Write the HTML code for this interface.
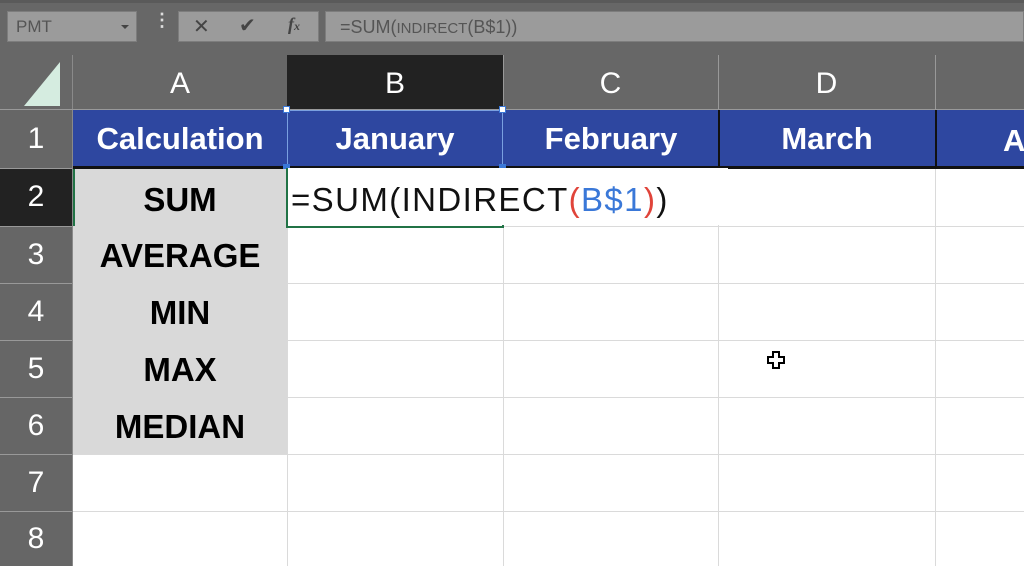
<!DOCTYPE html>
<html><head><meta charset="utf-8"><style>
*{margin:0;padding:0;box-sizing:border-box}
body{width:1024px;height:566px;overflow:hidden;background:#fff;font-family:"Liberation Sans",sans-serif;position:relative}
.a{position:absolute}
.c{display:flex;align-items:center;justify-content:center}
.hd{color:#fff;font-size:30px}
.bl{background:#2e47a0;color:#fff;font-weight:bold;font-size:31px}
.gr{background:#d9d9d9;color:#000;font-weight:bold;font-size:33px}
</style></head><body>
<div class="a" style="left:0;top:0;width:1024px;height:110px;background:#676767"></div>
<div class="a" style="left:0;top:0;width:1024px;height:3px;background:#5a5a5a"></div>
<div class="a" style="left:7px;top:11px;width:130px;height:31px;background:#9b9b9b;border:1px solid #7d7d7d;color:#555;font-size:17px;padding:5px 0 0 8px">PMT<span class="a" style="left:113px;top:13px;border-left:4px solid transparent;border-right:4px solid transparent;border-top:4px solid #444"></span></div>
<div class="a" style="left:153px;top:10px;color:#ddd;font-size:18px;font-weight:bold">⋮</div>
<div class="a" style="left:178px;top:11px;width:141px;height:31px;background:#9b9b9b;border:1px solid #7d7d7d"></div>
<div class="a" style="left:193px;top:14px;color:#444;font-size:20px">✕</div>
<div class="a" style="left:239px;top:13px;color:#444;font-size:20px">✔</div>
<div class="a" style="left:288px;top:14px;color:#444;font-size:18px;font-style:italic;font-family:'Liberation Serif',serif;font-weight:bold">f<span style="font-size:12px">x</span></div>
<div class="a" style="left:325px;top:11px;width:699px;height:31px;background:#9b9b9b;border:1px solid #7d7d7d;color:#555;font-size:18px;padding:5px 0 0 14px">=SUM(<span style="font-size:15px">INDIRECT</span>(B$1))</div>
<div class="a" style="left:24px;top:62px;width:36px;height:44px;background:#d5ece0;clip-path:polygon(100% 0,100% 100%,0 100%)"></div>
<div class="a" style="left:72px;top:55px;width:1px;height:511px;background:#8a8a8a"></div>
<div class="a c hd" style="left:73px;top:55px;width:214px;height:58px">A</div>
<div class="a c hd" style="left:287px;top:55px;width:216px;height:54px;background:#222;padding-top:4px">B</div>
<div class="a c hd" style="left:503px;top:55px;width:215px;height:58px">C</div>
<div class="a c hd" style="left:718px;top:55px;width:217px;height:58px">D</div>
<div class="a" style="left:718px;top:55px;width:1px;height:54px;background:#999"></div>
<div class="a" style="left:935px;top:55px;width:1px;height:54px;background:#999"></div>
<div class="a" style="left:503px;top:55px;width:1px;height:54px;background:#999"></div>
<div class="a" style="left:0;top:109px;width:1024px;height:1px;background:#999"></div>
<div class="a" style="left:0;top:110px;width:72px;height:456px;background:#666"></div>
<div class="a c hd" style="left:0;top:110px;width:72px;height:58px">1</div>
<div class="a c hd" style="left:0;top:168px;width:72px;height:58px;background:#222">2</div>
<div class="a c hd" style="left:0;top:226px;width:72px;height:57px;border-top:1px solid #999">3</div>
<div class="a c hd" style="left:0;top:283px;width:72px;height:57px;border-top:1px solid #999">4</div>
<div class="a c hd" style="left:0;top:340px;width:72px;height:57px;border-top:1px solid #999">5</div>
<div class="a c hd" style="left:0;top:397px;width:72px;height:57px;border-top:1px solid #999">6</div>
<div class="a c hd" style="left:0;top:454px;width:72px;height:57px;border-top:1px solid #999">7</div>
<div class="a c hd" style="left:0;top:511px;width:72px;height:55px;border-top:1px solid #999">8</div>
<div class="a" style="left:0;top:168px;width:72px;height:1px;background:#999"></div>
<div class="a" style="left:73px;top:226px;width:951px;height:1px;background:#dadada"></div>
<div class="a" style="left:73px;top:283px;width:951px;height:1px;background:#dadada"></div>
<div class="a" style="left:73px;top:340px;width:951px;height:1px;background:#dadada"></div>
<div class="a" style="left:73px;top:397px;width:951px;height:1px;background:#dadada"></div>
<div class="a" style="left:73px;top:454px;width:951px;height:1px;background:#dadada"></div>
<div class="a" style="left:73px;top:511px;width:951px;height:1px;background:#dadada"></div>
<div class="a" style="left:287px;top:168px;width:1px;height:398px;background:#dadada"></div>
<div class="a" style="left:503px;top:168px;width:1px;height:398px;background:#dadada"></div>
<div class="a" style="left:718px;top:168px;width:1px;height:398px;background:#dadada"></div>
<div class="a" style="left:935px;top:168px;width:1px;height:398px;background:#dadada"></div>
<div class="a" style="left:73px;top:110px;width:951px;height:58px;background:#2e47a0"></div>
<div class="a c bl" style="left:73px;top:110px;width:214px;height:57px">Calculation</div>
<div class="a c bl" style="left:287px;top:110px;width:216px;height:57px;border:1px solid #7aa0e0">January</div>
<div class="a c bl" style="left:504px;top:110px;width:214px;height:57px">February</div>
<div class="a c bl" style="left:719px;top:110px;width:216px;height:57px">March</div>
<div class="a bl" style="left:1003px;top:123px;">A</div>
<div class="a" style="left:718px;top:110px;width:2px;height:58px;background:#111"></div>
<div class="a" style="left:935px;top:110px;width:2px;height:58px;background:#111"></div>
<div class="a" style="left:73px;top:166px;width:951px;height:3px;background:#111"></div>
<div class="a" style="left:283px;top:106px;width:7px;height:7px;background:#fff;border:1px solid #3a78d8"></div>
<div class="a" style="left:499px;top:106px;width:7px;height:7px;background:#fff;border:1px solid #3a78d8"></div>
<div class="a" style="left:283px;top:164px;width:7px;height:7px;background:#3a78d8"></div>
<div class="a" style="left:499px;top:164px;width:7px;height:7px;background:#3a78d8"></div>
<div class="a c gr" style="left:73px;top:169px;width:214px;height:61px">SUM</div>
<div class="a c gr" style="left:73px;top:227px;width:214px;height:58px">AVERAGE</div>
<div class="a c gr" style="left:73px;top:284px;width:214px;height:58px">MIN</div>
<div class="a c gr" style="left:73px;top:341px;width:214px;height:58px">MAX</div>
<div class="a c gr" style="left:73px;top:398px;width:214px;height:56px;padding-top:2px">MEDIAN</div>
<div class="a" style="left:73px;top:169px;width:2px;height:57px;background:#217346"></div>
<div class="a" style="left:286px;top:168px;width:218px;height:60px;border:2px solid #217346;border-top:none"></div>
<div class="a" style="left:288px;top:168px;width:440px;height:57px;background:#fff;font-size:33px;letter-spacing:1.4px;color:#111;padding-top:13px;padding-left:3px;white-space:nowrap">=SUM(INDIRECT<span style="color:#e0443a">(</span><span style="color:#3a78d8">B$1</span><span style="color:#e0443a">)</span>)</div>
<div class="a" style="left:767px;top:351px;width:18px;height:18px">
<svg width="18" height="18" viewBox="0 0 18 18"><path d="M6 1h6v5h5v6h-5v5H6v-5H1V6h5z" fill="#fff" stroke="#000" stroke-width="2"/></svg></div>
</body></html>
